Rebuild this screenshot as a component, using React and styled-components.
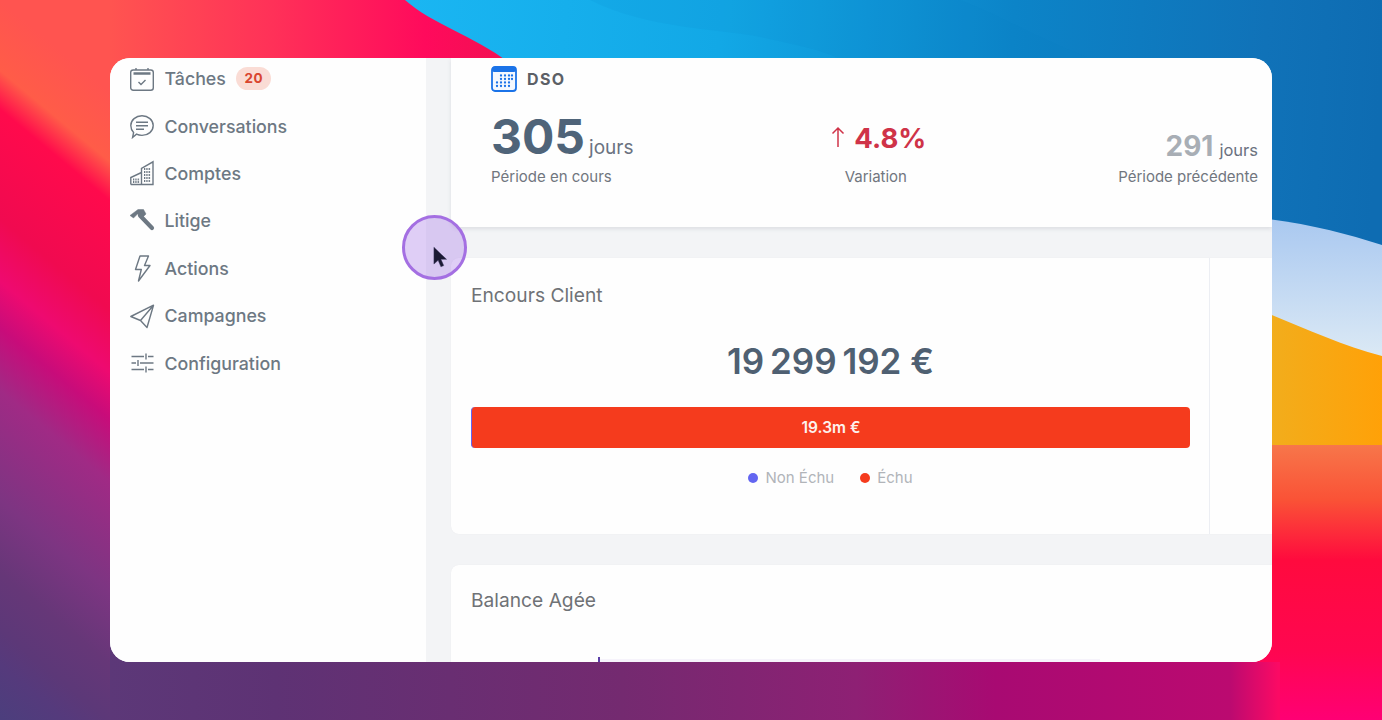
import React from 'react';
import styled, { createGlobalStyle } from 'styled-components';

const GlobalStyle = createGlobalStyle`
  html, body {
    margin: 0;
    padding: 0;
    height: 720px;
    overflow: hidden;
    font-family: Inter, "Liberation Sans", sans-serif;
  }
`;

const Stage = styled.div`
  position: relative;
  width: 1382px;
  height: 720px;
  padding: 58px 110px;
  box-sizing: border-box;
  overflow: hidden;
`;

const WallpaperSvg = styled.svg`
  position: absolute;
  inset: 0;
`;

const Window = styled.div`
  position: relative;
  display: flex;
  height: 604px;
  background: #f3f4f6;
  border-radius: 20px;
  overflow: hidden;
`;

const Sidebar = styled.nav`
  flex: 0 0 316px;
  display: flex;
  flex-direction: column;
  margin-top: -3px;
  padding-left: 20px;
  box-sizing: border-box;
  background: #fefefe;
`;

const NavRow = styled.div`
  display: flex;
  align-items: center;
  gap: 10.5px;
  height: 47.4px;
  color: #6d7883;
  font-size: 17.8px;
  font-weight: 500;
`;

const NavIcon = styled.svg`
  width: 24px;
  height: 24px;
  flex: none;
  overflow: visible;
  fill: none;
  stroke: #6d7883;
  stroke-width: 1.4;
`;

const Badge = styled.span`
  padding: 0 8px;
  height: 23px;
  line-height: 23px;
  border-radius: 12px;
  background: #fadcd5;
  color: #d9452f;
  font-size: 13.5px;
  font-weight: 700;
  letter-spacing: 0.6px;
`;

const Main = styled.main`
  flex: 1;
  min-width: 0;
  display: flex;
  flex-direction: column;
  gap: 31px;
  padding-left: 25px;
`;

const Card = styled.section`
  flex: none;
  height: ${p => p.$height}px;
  background: #fefefe;
  border-radius: ${p => (p.$flatTop ? '0 0 0 8px' : '8px 0 0 8px')};
  box-shadow: ${p => (p.$raised ? '0 2px 4px rgba(60, 66, 87, 0.12)' : '0 0 1px rgba(60, 66, 87, 0.08)')};
  box-sizing: border-box;
`;

const DsoCard = styled(Card)`
  padding: 8px 14px 0 40px;
`;

const DsoHead = styled.div`
  display: flex;
  align-items: center;
  gap: 10px;
  height: 26px;
  color: #5c6066;
  font-size: 16px;
  font-weight: 700;
  letter-spacing: 1.4px;
`;

const Stats = styled.div`
  display: flex;
  justify-content: space-between;
  margin-top: 17px;
`;

const Stat = styled.div`
  display: flex;
  flex-direction: column;
  align-items: ${p => p.$align};
`;

const StatValue = styled.div`
  display: flex;
  align-items: baseline;
  gap: ${p => p.$gap || 6}px;
  height: 56px;
  padding-left: ${p => p.$indent || 0}px;
`;

const Number = styled.span`
  color: ${p => p.$color};
  font-size: ${p => p.$size}px;
  font-weight: 700;
  line-height: ${p => p.$line}px;
`;

const TrendArrow = styled.svg`
  margin-right: 9px;
  fill: none;
  stroke: #cf3348;
  stroke-width: 1.5;
`;

const Unit = styled.span`
  color: #6b7280;
  font-size: ${p => p.$size}px;
`;

const StatLabel = styled.div`
  margin-top: 2px;
  color: #71767e;
  font-size: 15px;
  line-height: 20px;
`;

const Split = styled(Card)`
  display: flex;
`;

const Panel = styled.div`
  flex: 0 0 759px;
  box-sizing: border-box;
  padding: 25px 19px 0 20px;
  border-right: 1.5px solid #eceef3;
`;

const CardTitle = styled.h2`
  margin: 0;
  color: #6f7276;
  font-size: 19.2px;
  font-weight: 400;
  line-height: 24px;
`;

const Total = styled.div`
  margin-top: 32px;
  color: #4f6072;
  font-size: 35px;
  font-weight: 600;
  line-height: 44px;
  text-align: center;
`;

const Bar = styled.div`
  display: flex;
  align-items: center;
  justify-content: center;
  margin-top: 24px;
  height: 41px;
  background: #f53b1d;
  border-left: 1px solid #6366f1;
  border-radius: 4px;
  color: #fdf1ed;
  font-size: 15.5px;
  font-weight: 600;
`;

const Legend = styled.div`
  display: flex;
  justify-content: center;
  gap: 26px;
  margin-top: 20px;
`;

const LegendItem = styled.span`
  display: flex;
  align-items: center;
  gap: 7px;
  color: #b1b4b9;
  font-size: 15px;
  line-height: 20px;
`;

const Dot = styled.i`
  width: 10px;
  height: 10px;
  border-radius: 50%;
  background: ${p => p.$color};
`;

const BalanceCard = styled(Card)`
  padding: 23px 20px 0;
`;

const ChartStub = styled.div`
  display: flex;
  align-items: flex-end;
  height: 6px;
  margin: 45px 0 0 127px;
`;

const ChartTick = styled.i`
  width: 2px;
  height: 6px;
  background: #5b3fa8;
`;

const ChartLine = styled.i`
  flex: 0 0 500px;
  height: 4px;
  background: #f6f3fb;
`;

const Halo = styled.div`
  position: absolute;
  left: 292px;
  top: 157px;
  width: 65px;
  height: 65px;
  box-sizing: border-box;
  border: 3px solid #a46fe2;
  border-radius: 50%;
  background: rgba(166, 118, 232, 0.35);
`;

const Cursor = styled.svg`
  position: absolute;
  left: 28px;
  top: 28px;
  width: 14px;
  height: 23px;
`;

const Wallpaper = () => (
  <WallpaperSvg width="1382" height="720" viewBox="0 0 1382 720">
    <defs>
      <linearGradient id="bottom" x1="0" x2="1382" y1="0" y2="0" gradientUnits="userSpaceOnUse">
        <stop offset="0" stopColor="#4a3f7d" />
        <stop offset="0.08" stopColor="#5c3878" />
        <stop offset="0.2" stopColor="#5e3274" />
        <stop offset="0.45" stopColor="#742a70" />
        <stop offset="0.62" stopColor="#8e2074" />
        <stop offset="0.72" stopColor="#a80a72" />
        <stop offset="0.89" stopColor="#bb0a70" />
        <stop offset="0.925" stopColor="#fb0a64" />
        <stop offset="1" stopColor="#ff0a66" />
      </linearGradient>
      <linearGradient id="left" x1="0" y1="0" x2="-384" y2="462" gradientUnits="userSpaceOnUse">
        <stop offset="0" stopColor="#ff5450" />
        <stop offset="0.09" stopColor="#ff5c48" />
        <stop offset="0.14" stopColor="#ff0a4c" />
        <stop offset="0.28" stopColor="#f00a50" />
        <stop offset="0.36" stopColor="#ee0a70" />
        <stop offset="0.42" stopColor="#c80c7a" />
        <stop offset="0.5" stopColor="#a02a85" />
        <stop offset="0.64" stopColor="#7d3582" />
        <stop offset="0.733" stopColor="#663778" />
        <stop offset="0.807" stopColor="#5c3878" />
        <stop offset="0.85" stopColor="#553a7c" />
        <stop offset="0.933" stopColor="#4a3f7d" />
      </linearGradient>
      <linearGradient id="top" x1="110" x2="505" y1="0" y2="0" gradientUnits="userSpaceOnUse">
        <stop offset="0" stopColor="#ff5450" />
        <stop offset="0.4" stopColor="#ff3258" />
        <stop offset="0.8" stopColor="#ff0a5c" />
        <stop offset="1" stopColor="#f21052" />
      </linearGradient>
      <linearGradient id="blue" x1="410" x2="1382" y1="0" y2="60" gradientUnits="userSpaceOnUse">
        <stop offset="0" stopColor="#1ab6f2" />
        <stop offset="0.32" stopColor="#12a8e6" />
        <stop offset="0.62" stopColor="#0c84c8" />
        <stop offset="0.88" stopColor="#1072b8" />
        <stop offset="1" stopColor="#0e6cb2" />
      </linearGradient>
      <linearGradient id="sky" x1="0" x2="0" y1="217" y2="356" gradientUnits="userSpaceOnUse">
        <stop offset="0" stopColor="#a9c8f0" />
        <stop offset="1" stopColor="#dbe9f5" />
      </linearGradient>
      <linearGradient id="amber" x1="1272" x2="1382" y1="0" y2="0" gradientUnits="userSpaceOnUse">
        <stop offset="0" stopColor="#f2ad1c" />
        <stop offset="1" stopColor="#ffa108" />
      </linearGradient>
      <linearGradient id="coral" x1="0" x2="0" y1="445" y2="720" gradientUnits="userSpaceOnUse">
        <stop offset="0" stopColor="#f7764a" />
        <stop offset="0.2" stopColor="#fa5236" />
        <stop offset="0.42" stopColor="#ff0a3e" />
        <stop offset="0.75" stopColor="#ff0650" />
        <stop offset="1" stopColor="#ff0074" />
      </linearGradient>
    </defs>
    <rect width="1382" height="720" fill="url(#bottom)" />
    <rect width="110" height="720" fill="url(#left)" />
    <rect x="110" width="420" height="85" fill="url(#top)" />
    <path d="M405 0 C432 24 474 36 508 62 L508 270 L1382 270 L1382 0 Z" fill="url(#blue)" />
    <path d="M590 0 C650 30 720 28 765 38 C800 46 825 50 845 62 L1100 62 C1040 40 1000 15 960 0 Z" fill="#0d7fc4" fillOpacity="0.1" />
    <path d="M1200 213 C1280 217 1330 228 1382 245 L1382 360 L1200 360 Z" fill="url(#sky)" />
    <path d="M1200 290 C1260 305 1320 340 1382 356 L1382 450 L1200 450 Z" fill="url(#amber)" />
    <rect x="1200" y="445" width="182" height="217" fill="url(#coral)" />
    <rect x="1280" y="662" width="102" height="58" fill="url(#coral)" />
  </WallpaperSvg>
);

const navItems = [
  {
    label: 'Tâches',
    badge: '20',
    icon: (
      <>
        <rect x="0.7" y="3" width="22.6" height="20.3" rx="2.5" />
        <path d="M6 1v2M18 1v2" />
        <path d="M3.500 6.500h17" strokeWidth="2.400" />
        <path d="M8.500 15l2.500 2.500 4.500-4.500" />
      </>
    ),
  },
  {
    label: 'Conversations',
    icon: (
      <>
        <path d="M12 1.800c6.200 0 11.200 4.200 11.200 9.800s-5 9.800-11.200 9.800c-2 0-3.900-.4-5.500-1.200L2.600 23.500l1-5C1.800 16.700.8 14.300.8 11.600.8 6 5.800 1.800 12 1.800z" />
        <path d="M6 8.200h12M6 11.800h12M6 15.300h8" />
      </>
    ),
  },
  {
    label: 'Comptes',
    icon: (
      <>
        <path d="M.8 23.500V16.500L11.500 11.500M11.500 23.500V7.500L23 .8v22.700zM.8 23.500H23" />
        <path d="M14 8h7M14 11h7M14 14h7M14 17h7M14 20h7M3 18.500h7M3 21h7" strokeWidth="1.800" strokeDasharray="1.300 1" />
      </>
    ),
  },
  {
    label: 'Litige',
    icon: (
      <>
        <path d="M0 6.500L8 .5h5.500l2.500 4.500-4 4-4.500-4-4 4z" fill="#6d7883" strokeWidth="0.500" />
        <path d="M10 6.500l12 12.500" strokeWidth="4.200" strokeLinecap="round" />
      </>
    ),
  },
  {
    label: 'Actions',
    icon: <path d="M10 0h8.500L14.500 9.500h5.500L8.500 25l2.800-11.500H5.500z" strokeLinejoin="round" />,
  },
  {
    label: 'Campagnes',
    icon: <path d="M.8 12.500L23.500 1.200 17 23.500 10.500 16.500zM23.500 1.200L10.500 16.500" strokeLinejoin="round" />,
  },
  {
    label: 'Configuration',
    icon: <path d="M1.500 5.500H14M18 5.500h5.500M16 2.500v6M1.500 12H6M10 12h13.500M8 9v6M1.500 18.500H14M18 18.500h5.500M16 15.500v6" />,
  },
];

const DsoIcon = () => (
  <svg width="26" height="26" viewBox="0 0 26 26">
    <rect x="1" y="1" width="24" height="24" rx="3" fill="#f4f8fe" stroke="#1b73e8" strokeWidth="1.800" />
    <rect x="1" y="1" width="24" height="5" rx="2" fill="#1b73e8" />
    <g fill="#1b73e8">
      {[9.5, 13, 16.5, 20].map(y =>
        [6, 10, 14, 18, 21].slice(y > 16 ? 0 : 1, y > 16 ? 4 : 5).map(x => (
          <circle key={`${x}-${y}`} cx={x} cy={y} r="1.150" />
        ))
      )}
    </g>
  </svg>
);

const App = () => (
  <Stage>
    <GlobalStyle />
    <Wallpaper />
    <Window>
      <Sidebar>
        {navItems.map(item => (
          <NavRow key={item.label}>
            <NavIcon viewBox="0 0 24 24">{item.icon}</NavIcon>
            <span>{item.label}</span>
            {item.badge && <Badge>{item.badge}</Badge>}
          </NavRow>
        ))}
      </Sidebar>
      <Main>
        <DsoCard $height={169} $flatTop $raised>
          <DsoHead>
            <DsoIcon />
            DSO
          </DsoHead>
          <Stats>
            <Stat $align="flex-start">
              <StatValue $gap={4}>
                <Number $color="#4f6479" $size={48} $line={56}>305</Number>
                <Unit $size={19}>jours</Unit>
              </StatValue>
              <StatLabel>Période en cours</StatLabel>
            </Stat>
            <Stat $align="center">
              <StatValue $indent={6}>
                <Number $color="#cf3348" $size={27.5} $line={58}>
                  <TrendArrow width="14" height="22" viewBox="0 0 14 22">
                    <path d="M7 21V2M1.500 7.500L7 2l5.500 5.500" />
                  </TrendArrow>
                  4.8%
                </Number>
              </StatValue>
              <StatLabel>Variation</StatLabel>
            </Stat>
            <Stat $align="flex-end">
              <StatValue>
                <Number $color="#a8aeb5" $size={28} $line={74}>291</Number>
                <Unit $size={16.5}>jours</Unit>
              </StatValue>
              <StatLabel>Période précédente</StatLabel>
            </Stat>
          </Stats>
        </DsoCard>
        <Split $height={276}>
          <Panel>
            <CardTitle>Encours Client</CardTitle>
            <Total>19{'\u2009'}299{'\u2009'}192 €</Total>
            <Bar>19.3m €</Bar>
            <Legend>
              <LegendItem><Dot $color="#6366f1" />Non Échu</LegendItem>
              <LegendItem><Dot $color="#f53b1d" />Échu</LegendItem>
            </Legend>
          </Panel>
        </Split>
        <BalanceCard $height={200}>
          <CardTitle>Balance Agée</CardTitle>
          <ChartStub>
            <ChartTick />
            <ChartLine />
          </ChartStub>
        </BalanceCard>
      </Main>
      <Halo>
        <Cursor viewBox="0 0 15 24">
          <path d="M1 1v18l4.500-4 3 7 3-1.300-3-6.700h6z" fill="#1c1a33" stroke="#3a3560" strokeWidth="0.500" />
        </Cursor>
      </Halo>
    </Window>
  </Stage>
);

export default App;
